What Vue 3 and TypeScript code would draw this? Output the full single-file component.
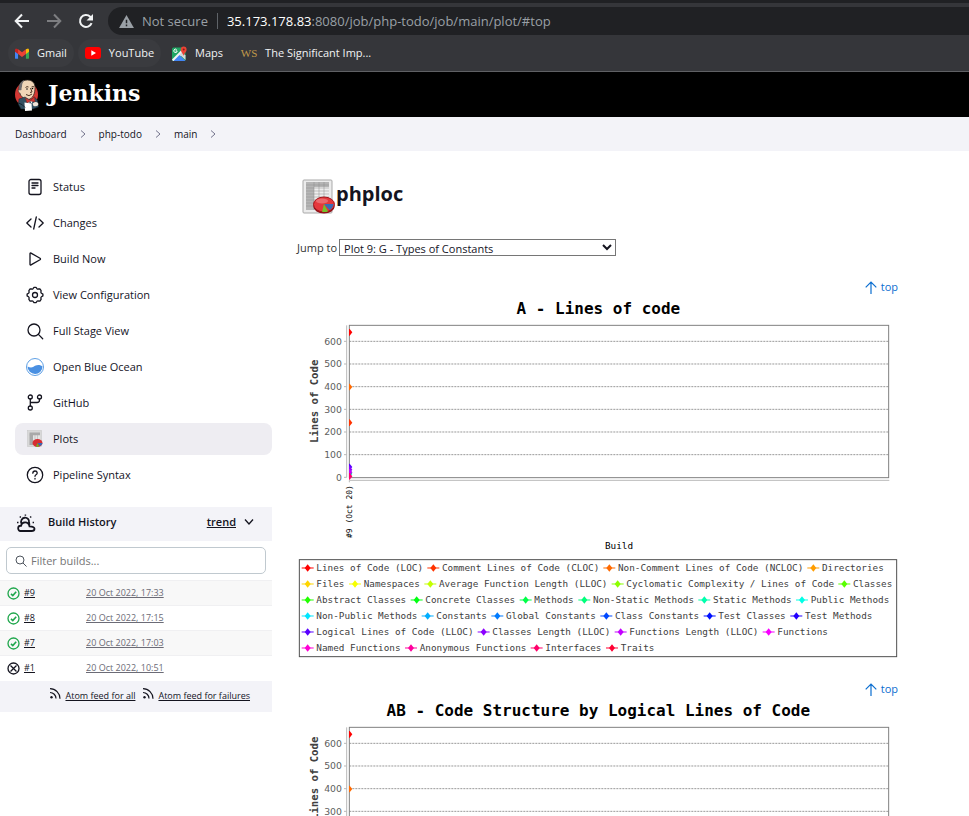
<script setup lang="ts">
import { ref } from 'vue'

interface Task { label: string; icon: string; active?: boolean }
interface Build { id: string; date: string; ok: boolean }
interface Series { name: string; color: string; x: number; y: number }
interface Chart { title: string; labelY: number; ticks: number[]; details: boolean }

const tasks: Task[] = [
  { label: 'Status', icon: 'status' },
  { label: 'Changes', icon: 'changes' },
  { label: 'Build Now', icon: 'play' },
  { label: 'View Configuration', icon: 'gear' },
  { label: 'Full Stage View', icon: 'search' },
  { label: 'Open Blue Ocean', icon: 'ocean' },
  { label: 'GitHub', icon: 'branch' },
  { label: 'Plots', icon: 'plots', active: true },
  { label: 'Pipeline Syntax', icon: 'help' },
]

const builds: Build[] = [
  { id: '#9', date: '20 Oct 2022, 17:33', ok: true },
  { id: '#8', date: '20 Oct 2022, 17:15', ok: true },
  { id: '#7', date: '20 Oct 2022, 17:03', ok: true },
  { id: '#1', date: '20 Oct 2022, 10:51', ok: false },
]

const crumbs = ['Dashboard', 'php-todo', 'main']
const charts: Chart[] = [
  { title: 'A - Lines of code', labelY: 313, ticks: [0, 100, 200, 300, 400, 500, 600], details: true },
  { title: 'AB - Code Structure by Logical Lines of Code', labelY: 238, ticks: [300, 400, 500, 600], details: false },
]
const options = ['Plot 9: G - Types of Constants', 'Plot 1: A - Lines of code']
const jump = ref(options[0])
const filter = ref('')

const legendRows = [
  ['Lines of Code (LOC)', 'Comment Lines of Code (CLOC)', 'Non-Comment Lines of Code (NCLOC)', 'Directories'],
  ['Files', 'Namespaces', 'Average Function Length (LLOC)', 'Cyclomatic Complexity / Lines of Code', 'Classes'],
  ['Abstract Classes', 'Concrete Classes', 'Methods', 'Non-Static Methods', 'Static Methods', 'Public Methods'],
  ['Non-Public Methods', 'Constants', 'Global Constants', 'Class Constants', 'Test Classes', 'Test Methods'],
  ['Logical Lines of Code (LLOC)', 'Classes Length (LLOC)', 'Functions Length (LLOC)', 'Functions'],
  ['Named Functions', 'Anonymous Functions', 'Interfaces', 'Traits'],
]
const seriesCount = legendRows.flat().length
const hue = (i: number): string => `hsl(${Math.round((i * 360) / seriesCount)}, 100%, 50%)`

// Legend entries run left to right; each one is as wide as its monospaced label plus the marker.
const CHAR = 17
const GAP = 58
const series: Series[] = []
legendRows.forEach((row, r) => {
  let x = 55
  row.forEach((name) => {
    series.push({ name, color: hue(series.length), x, y: 823 + r * 48 })
    x += name.length * CHAR + GAP - Math.round(name.length / 5)
  })
})

const yOf = (v: number): number => Math.round(541 - v * 0.68)
const points = [
  { v: 640, c: hue(0) }, { v: 398, c: hue(2) }, { v: 241, c: hue(1) },
  { v: 14, c: hue(14) }, { v: 20, c: hue(11) },
  { v: 46, c: hue(21) }, { v: 34, c: hue(22) }, { v: 22, c: hue(23) }, { v: 4, c: hue(27) },
]
</script>

<template>
  <div class="window">
    <div class="browser">
      <div class="toolbar">
        <button class="nav" aria-label="Back"><svg viewBox="0 0 16 16" width="16" height="16"><path d="M15 8H2M8 1.5 1.7 8 8 14.5" fill="none" stroke="#f1f3f4" stroke-width="2" /></svg></button>
        <button class="nav" aria-label="Forward"><svg viewBox="0 0 16 16" width="16" height="16"><path d="M1 8h13M8 1.5 14.3 8 8 14.5" fill="none" stroke="#7d7e81" stroke-width="2" /></svg></button>
        <button class="nav" aria-label="Reload"><svg viewBox="0 0 16 16" width="16" height="16"><path d="M13.6 10.2A6 6 0 1 1 12.2 3.7L14 5.5" fill="none" stroke="#f1f3f4" stroke-width="2" /><path d="M15 1v6.5H8.5z" fill="#f1f3f4" /></svg></button>
        <div class="address">
          <svg viewBox="0 0 16 14" width="15" height="13"><path d="M8 0 16 14H0z" fill="#9aa0a6" /><path d="M7.2 5h1.6v4H7.2zM7.2 10.3h1.6V12H7.2z" fill="#202124" /></svg>
          <span class="insecure">Not secure</span>
          <span class="divider"></span>
          <span class="url"><b>35.173.178.83</b>:8080/job/php-todo/job/main/plot/#top</span>
        </div>
      </div>
      <nav class="bookmarks">
        <a href="#" class="chip gmail">
          <svg viewBox="0 0 16 12" width="14" height="11"><path d="M0 1.5V11a1 1 0 0 0 1 1h2.5V4z" fill="#4285f4" /><path d="M16 1.5V11a1 1 0 0 1-1 1h-2.5V4z" fill="#34a853" /><path d="M12.5 1 15 .2 16 1.5V4l-3.500 2.500z" fill="#fbbc04" /><path d="M0 1.5 1 .2 3.500 1v5.500L0 4z" fill="#c5221f" /><path d="M3.500 1 8 4.600 12.500 1v5.500L8 10 3.500 6.500z" fill="#ea4335" /></svg>Gmail</a>
        <a href="#" class="chip youtube"><svg viewBox="0 0 16 12" width="16" height="12"><rect width="16" height="12" rx="3" fill="#f00" /><path d="M6.300 3.300v5.400L11 6z" fill="#fff" /></svg>YouTube</a>
        <a href="#" class="chip">
          <svg viewBox="0 0 15 15" width="15" height="15"><rect y="1.500" width="13.500" height="13.500" rx="1.500" fill="#1fa463" /><path d="M0 13.500 10 3.500 13 6 2.500 15H1z" fill="#f1f3f4" /><path d="M7.500 8.500 10 6l3.500 3.500V14z" fill="#d5d7da" /><path d="M1.500 15 7.500 9l6 6z" fill="#4285f4" /><path d="M11.500 10C11 7 8.800 6.500 8.800 3.500a2.900 2.900 0 0 1 5.800 0C14.600 6.500 12 7 11.500 10z" fill="#ea4335" /><circle cx="11.700" cy="3.400" r="1" fill="#8c1b13" /><path d="M5.200 5A1.700 1.700 0 1 1 4.600 3.500M3.600 4.900h1.600" fill="none" stroke="#fff" /></svg>Maps</a>
        <a href="#" class="chip"><span class="ws">WS</span>The Significant Imp...</a>
      </nav>
    </div>

    <header class="jenkins">
      <svg viewBox="0 0 48 64" width="24" height="32">
        <ellipse cx="23" cy="31" rx="23" ry="25" fill="#d33833" />
        <path d="M8 22C7 8 15 2 25 2c10 0 15 7 15 15 0 12-4 23-14 24-9 0-17-8-18-19z" fill="#f0d6b7" stroke="#2b2420" stroke-width="1.500" />
        <path d="M9 27C5 17 9 5 19 2c-4 5-5 8-5 13-1 3-1 4-1 7l-4 1z" fill="#6d6b6d" />
        <path d="M9 21c-4-1-3 7 2 8" fill="#f0d6b7" stroke="#2b2420" />
        <path d="M21 17q3-3 6-1M33 16q3-2 5 0M31 18l3 8-4 1M22 31q6 5 12-1" fill="none" stroke="#4d3525" stroke-width="2" />
        <circle cx="24" cy="20" r="1.500" /><circle cx="35" cy="19" r="1.500" />
        <path d="M8 40 20 36 31 43 39 36 45 43 47 56 36 60H12L7 51z" fill="#335061" stroke="#17262f" />
        <path d="M21 39 28 49 30 43zM30 43l3 6 4-7z" fill="#fff" />
        <path d="m21 38 9 5 9-7 1 10-9-2-7 4z" fill="#d33833" stroke="#81201d" />
        <path d="M19 47l14 2 1 14-14 1z" fill="#fff" /><path d="M35 49q9-6 12 1-1 6-10 4z" fill="#f0e4d8" />
        <path d="M7 48q8 2 13 9" fill="none" stroke="#17262f" stroke-width="2" />
      </svg>
      <span>Jenkins</span>
    </header>
    <nav class="crumbs">
      <template v-for="c in crumbs" :key="c">
        <a href="#">{{ c }}</a>
        <svg viewBox="0 0 6 8" width="6" height="8"><path d="m1 .5 4 3.500-4 3.500" fill="none" stroke="#73738c" /></svg>
      </template>
    </nav>

    <div class="page">
      <aside>
        <nav class="tasks">
          <a v-for="t in tasks" :key="t.label" href="#" :class="{ active: t.active }">
            <svg v-if="t.icon === 'status'" class="line" viewBox="0 0 18 18"><rect x="3" y="1.500" width="12" height="15" rx="2" /><path d="M6 5h6M6 7.500h6M6 10h3" /></svg>
            <svg v-else-if="t.icon === 'changes'" class="line" viewBox="0 0 18 18"><path d="M5 5 .8 9 5 13M13 5l4.200 4L13 13M10.300 3 7.700 15" /></svg>
            <svg v-else-if="t.icon === 'play'" class="line" viewBox="0 0 18 18"><path d="M4 3.700v10.600q0 1.200 1 .6l9-5.200q1-.7 0-1.400L5 3.100q-1-.6-1 .6z" /></svg>
            <svg v-else-if="t.icon === 'gear'" class="line" viewBox="0 0 18 18"><path d="M7 2.700 8 1.300h2l1 1.400q.5.500 1.200.3l1.700-.1 1.200 1.700-.2 1.600q0 .7.600 1l1.400.9v1.800l-1.400.9q-.6.400-.6 1l.2 1.600-1.200 1.700-1.700-.1q-.7-.200-1.200.3l-1 1.400H8l-1-1.400q-.5-.5-1.200-.3l-1.700.1-1.200-1.700.2-1.600q0-.6-.6-1L1.100 9.900V8.100L2.500 7.200q.6-.3.600-1l-.2-1.600L4.100 2.900 5.800 3q.7.200 1.200-.3z" /><circle cx="9" cy="9" r="2.500" /></svg>
            <svg v-else-if="t.icon === 'search'" class="line" viewBox="0 0 18 18"><circle cx="8" cy="8" r="6" /><path d="m12.400 12.400 4.300 4.300" /></svg>
            <svg v-else-if="t.icon === 'ocean'" viewBox="0 0 18 18"><circle cx="9" cy="9" r="8.500" fill="#fff" stroke="#5fa0e5" /><path d="M1.500 8.500q3.500 2 6 .3C10 7 12.500 6 16.500 8.300A7.500 7.500 0 0 1 1.500 8.500z" fill="#4a90e2" /></svg>
            <svg v-else-if="t.icon === 'branch'" class="line" viewBox="0 0 18 18"><circle cx="4.300" cy="3" r="2" /><circle cx="13.500" cy="3" r="2" /><circle cx="4.300" cy="14" r="2" /><path d="M4.300 5v7M13.500 5v1Q13.500 8.500 11 8.500H4.300" /></svg>
            <svg v-else-if="t.icon === 'plots'" viewBox="0 0 36 36"><rect x="3" y="1" width="28" height="32" fill="#d8d8d8" stroke="#c4c4c4" /><path d="M7 5h21v25H7z" fill="#a9a9a9" /><path d="M14 10h14v20H14z" fill="#e4e4e4" /><path d="M18 9v21M23 9v21M7 10h21" stroke="#aaa" /><ellipse cx="23" cy="26" rx="10" ry="8" fill="#d72d31" /><path d="M23 26h10q-1 5-5 6z" fill="#3769b5" /><path d="m23 26 3 7q-4 1-6 0z" fill="#6ab624" /></svg>
            <svg v-else class="line" viewBox="0 0 18 18"><circle cx="9" cy="9" r="7.700" /><path d="M6.800 7.200Q7 5 9 5t2.200 1.900Q11.200 8 10 8.700 9 9.300 9 10.300M9 12.500v.5" /></svg>
            <span>{{ t.label }}</span>
          </a>
        </nav>

        <section class="history">
          <div class="history-head">
            <svg class="weather" viewBox="0 0 20 20" width="20" height="20"><path d="M5.500 17H4.500a2.600 2.600 0 0 1 .5-5.200Q5.500 8.500 9 8.300t4.500 4q5 .2 5 2.400 0 2.300-3 2.300H5M5.500 9.500a4 4 0 1 1 7.500-1l.5 2.500" fill="none" stroke="#14141f" stroke-width="1.800" /><path d="M9.400.5v1.300M3.800 2.500l1 1M15.200 2.500l-1 1M1 8.500h1.500M16.600 8.500H18" stroke="#14141f" stroke-width="1.500" /></svg>
            <h2>Build History</h2>
            <a href="#">trend</a>
            <svg viewBox="0 0 10 8" width="10" height="8"><path d="m1 1.500 4 4.500 4-4.500" fill="none" stroke="#14141f" stroke-width="1.300" /></svg>
          </div>
          <label class="filter">
            <svg viewBox="0 0 12 12" width="12" height="12"><circle cx="5" cy="5" r="4" fill="none" stroke="#4d545d" /><path d="m8 8 3.500 3.500" stroke="#4d545d" /></svg>
            <input v-model="filter" type="text" placeholder="Filter builds..." aria-label="Filter builds" />
          </label>
          <table>
            <tbody>
              <tr v-for="b in builds" :key="b.id">
                <td class="id">
                  <div>
                    <svg v-if="b.ok" viewBox="0 0 13 13" width="13" height="13"><circle cx="6.500" cy="6.500" r="5.500" fill="none" stroke="#1ea64b" stroke-width="1.300" /><path d="m4 6.800 1.800 1.700L9.200 4.800" fill="none" stroke="#1ea64b" stroke-width="1.600" /></svg>
                    <svg v-else viewBox="0 0 13 13" width="13" height="13"><circle cx="6.500" cy="6.500" r="5.500" fill="none" stroke="#14141f" stroke-width="1.300" /><path d="m3.500 3.500 6 6m0-6-6 6" stroke="#14141f" stroke-width="1.300" /></svg>
                    <a href="#">{{ b.id }}</a>
                  </div>
                </td>
                <td><a href="#" class="date">{{ b.date }}</a></td>
              </tr>
            </tbody>
          </table>
          <div class="feeds">
            <a v-for="f in ['all', 'failures']" :key="f" href="#">
              <svg viewBox="0 0 11 11" width="11" height="11"><circle cx="1.500" cy="9.300" r="1.200" fill="#14141f" /><path d="M0 4.500A6 6 0 0 1 6 10.500M0 .7a10 10 0 0 1 10 10" fill="none" stroke="#14141f" stroke-width="1.200" /></svg><span>Atom feed for {{ f }}</span>
            </a>
          </div>
        </section>
      </aside>

      <main>
        <h1>
          <svg viewBox="0 0 34 36" width="34" height="36">
            <rect x="1" y="1" width="29" height="33" rx="1" fill="#ececec" stroke="#a9a9a9" />
            <path d="M4 3h23v28H4z" fill="#b5b5b5" /><path d="M12 8h15v23H12z" fill="#eee" />
            <path d="M4 6h23M4 9h23M4 12h23M4 15h23M4 18h23M4 21h23M4 24h23M4 27h23M12 3v28M17 3v28M22 3v28" stroke="#8e8e8e" stroke-width=".5" />
            <ellipse cx="22" cy="28" rx="10.500" ry="6.500" fill="#8d1117" />
            <ellipse cx="22" cy="25.500" rx="10.500" ry="7.500" fill="#e5383c" stroke="#a3161b" />
            <path d="M22 25h9.500q-.5 4-4 6z" fill="#3b6cb4" /><path d="m22 25 4 7.500q-3 1-6 .3z" fill="#73c22b" />
            <ellipse cx="20" cy="22" rx="6" ry="2.500" fill="#fff" opacity=".25" />
          </svg>
          <span>phploc</span>
        </h1>
        <div class="jump">
          <label for="jump">Jump to</label>
          <select id="jump" v-model="jump"><option v-for="o in options" :key="o">{{ o }}</option></select>
        </div>

        <section v-for="c in charts" :key="c.title" class="plot">
          <a href="#top" class="top"><svg viewBox="0 0 12 13" width="12" height="13"><path d="M6 13V1M.7 6.300 6 1l5.300 5.300" fill="none" stroke="#0b6ed0" stroke-width="1.200" /></svg>top</a>
          <svg class="chart" viewBox="0 0 1800 1085" role="img" :aria-label="c.title">
            <text x="901" y="51" class="title">{{ c.title }}</text>
            <text class="ylabel" :transform="`translate(60 ${c.labelY}) rotate(-90)`">Lines of Code</text>
            <g v-for="t in c.ticks" :key="t">
              <text x="132" :y="yOf(t) + 10" class="tick">{{ t }}</text>
              <path :d="`M138 ${yOf(t)}h8`" class="axis" />
              <path v-if="t" :d="`M154 ${yOf(t)}H1771`" class="grid" />
            </g>
            <path d="M146 85V541M154 550H1774M154 550v6" class="axis" />
            <rect x="154" y="85" width="1618" height="457" class="frame" />
            <path v-for="p in points" :key="p.v" :d="`M153 ${yOf(p.v) - 10}h2l8 10-8 10h-2z`" :fill="p.c" />
            <g v-if="c.details">
              <text class="xtick" transform="translate(161 723) rotate(-90)">#9 (Oct 20)</text>
              <text x="963" y="756" class="xlabel">Build</text>
              <rect x="4" y="788" width="1792" height="291" class="legend-box" />
              <g v-for="s in series" :key="s.name">
                <path :d="`M${s.x - 44} ${s.y - 10}h36`" :stroke="s.color" stroke-width="3" />
                <path :d="`M${s.x - 26} ${s.y - 21}l9 11-9 11-9-11z`" :fill="s.color" />
                <text :x="s.x" :y="s.y" class="legend">{{ s.name }}</text>
              </g>
            </g>
          </svg>
        </section>
      </main>
    </div>
  </div>
</template>

<style>
body { margin: 0; background: #fff; }
</style>

<style scoped>
* { box-sizing: border-box; }
.window { height: 100vh; overflow: hidden; display: flex; flex-direction: column; font: 11px/16px "Open Sans", "Noto Sans", sans-serif; color: #14141f; }
a { color: inherit; }
svg { flex: none; display: block; }
.browser { flex: none; background: #35363a; border-top: 3px solid #202124; border-bottom: 1px solid #5f6064; }
.toolbar { display: flex; align-items: center; padding: 4px 0 4px 14px; }
.nav { width: 16px; height: 16px; margin-right: 16px; padding: 0; border: 0; background: none; }
.nav:nth-child(3) { margin-right: 14px; }
.address { flex: 1; height: 28px; display: flex; align-items: center; padding-left: 11px; border-radius: 14px 0 0 14px; background: #202124; font-size: 13px; color: #9aa0a6; white-space: nowrap; }
.insecure { margin-left: 8px; }
.divider { width: 1px; height: 16px; margin: 0 9px; background: #5f6368; }
.url b { font-weight: 400; color: #fff; }
.bookmarks { display: flex; align-items: center; padding: 0 8px 4px; gap: 4px; }
.chip { height: 28px; display: flex; align-items: center; gap: 8px; padding: 0 7px; border-radius: 14px; font-size: 11px; color: #f1f3f4; text-decoration: none; white-space: nowrap; }
.gmail, .youtube { background: #3a3b3f; }
.ws { font: 11px/16px "Liberation Serif", serif; color: #c29a4b; width: 16px; display: flex; justify-content: center; }
.jenkins { flex: none; height: 45px; display: flex; align-items: center; gap: 9px; padding-left: 15px; background: #000; color: #fff; font: bold 22px/28px "DejaVu Serif", serif; }
.jenkins span { padding-bottom: 3px; }
.crumbs { flex: none; height: 34px; display: flex; align-items: center; gap: 13px; padding-left: 15px; background: #f3f3f8; font-size: 10px; }
.crumbs a { text-decoration: none; }
.page { flex: 1; min-height: 0; display: flex; gap: 25px; }
aside { flex: none; width: 272px; padding-top: 20px; }
.tasks { display: flex; flex-direction: column; gap: 4px; padding-left: 15px; }
.tasks a { height: 32px; display: flex; align-items: center; gap: 9px; padding-left: 11px; border-radius: 8px; text-decoration: none; }
.tasks svg { width: 18px; height: 18px; }
.tasks a.active { background: #eeedf2; }
.line { fill: none; stroke: #14141f; stroke-width: 1.300; stroke-linejoin: round; stroke-linecap: round; }
.history { margin-top: 16px; }
.history-head { height: 34px; display: flex; align-items: center; gap: 8px; padding: 0 18px 4px 16px; background: #f3f3f8; font-weight: 600; }
.history-head h2 { flex: 1; margin: 0 0 0 4px; font-size: 11px; font-weight: 600; }
.weather { margin-top: 4px; }
.filter { height: 27px; margin: 6px; display: flex; align-items: center; gap: 4px; padding-left: 8px; border: 1px solid #c0c9cf; border-radius: 5px; }
.filter input { flex: 1; min-width: 0; padding: 0; border: 0; outline: 0; background: none; font: 11px/16px "Open Sans", "Noto Sans", sans-serif; }
.filter input::placeholder { color: #757575; }
table { width: 100%; border-collapse: collapse; font-size: 9px; line-height: 12px; }
tr { height: 25px; border-top: 1px solid #f0f0f2; }
tr:nth-child(odd) { background: #f8f8f8; }
td { padding: 0; }
td.id { width: 86px; padding-left: 7px; }
td.id div { display: flex; align-items: center; gap: 4px; }
.date { color: #6b6b76; }
.feeds { height: 31px; display: flex; align-items: center; justify-content: flex-end; gap: 8px; padding-right: 22px; background: #f3f3f8; font-size: 9px; }
.feeds a { display: flex; gap: 4px; text-decoration: none; }
.feeds span { text-decoration: underline; }
main { flex: 1; min-width: 0; padding-right: 71px; }
h1 { margin: 28px 0 0 5px; height: 36px; display: flex; align-items: center; font-size: 20px; line-height: 28px; font-weight: 700; }
h1 span { padding-bottom: 6px; }
.jump { height: 17px; margin-top: 24px; display: flex; align-items: center; gap: 2px; }
.jump select { width: 277px; height: 17px; padding: 0; border: 1px solid #767676; border-radius: 0; background: #fff; color: #14141f; font: 11px/15px "Open Sans", "Noto Sans", sans-serif; }
.jump label { color: #333; }
.plot { height: 402px; padding-left: 1px; display: flex; flex-direction: column; align-items: flex-end; gap: 2px; }
.jump + .plot { margin-top: 23px; }
.top { display: flex; align-items: center; gap: 4px; height: 16px; color: #0b6ed0; text-decoration: none; }
.chart { width: 100%; height: auto; font-family: "DejaVu Sans Mono", monospace; }
.title { font-size: 48px; font-weight: 700; text-anchor: middle; }
.ylabel { font-size: 32px; font-weight: 700; fill: #404040; text-anchor: middle; }
.tick { font-family: "DejaVu Sans", sans-serif; font-size: 28px; fill: #606060; text-anchor: end; }
.xtick { font-size: 24px; }
.xlabel { font-size: 28px; text-anchor: middle; }
.legend { font-size: 28px; fill: #404040; }
.axis { fill: none; stroke: #b8b8b8; stroke-width: 3; }
.grid { stroke: #999; stroke-width: 3; stroke-dasharray: 6 3; }
.frame { fill: none; stroke: #808080; stroke-width: 3; }
.legend-box { fill: none; stroke: #505050; stroke-width: 3; }
</style>
